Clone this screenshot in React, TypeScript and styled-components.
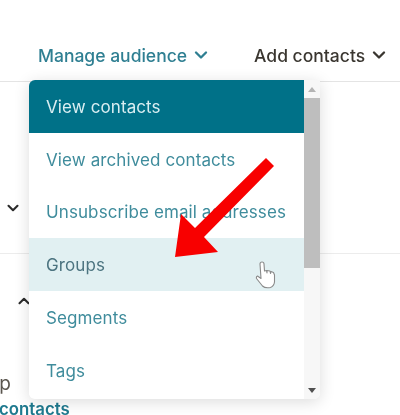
import React from 'react';
import styled, { createGlobalStyle } from 'styled-components';
import { ChevronDown, ChevronUp } from 'lucide-react';

const GlobalStyle = createGlobalStyle`
  html, body {
    margin: 0;
    padding: 0;
    background: #fff;
    overflow: hidden;
  }
`;

const Page = styled.div`
  position: relative;
  width: 400px;
  height: 415px;
  overflow: hidden;
  background: #fff;
  font-family: Inter, "Liberation Sans", sans-serif;
  filter: blur(0.45px);
`;

const NavBar = styled.nav`
  height: 82px;
  box-sizing: border-box;
  border-bottom: 1px solid #e4e4e4;
  padding: 43px 0 0 38px;
  display: flex;
  gap: 43px;
`;

const NavItem = styled.div<{ $active?: boolean }>`
  display: flex;
  align-items: center;
  gap: 4px;
  height: 24px;
  font-size: 17.5px;
  font-weight: 500;
  color: ${(p) => (p.$active ? '#2f7f92' : '#3a3630')};
`;

const Body = styled.div`
  position: relative;
  height: 333px;
`;

const Divider = styled.div`
  height: 171px;
  border-bottom: 1px solid #ececec;
`;

const Toggle = styled.span<{ $left: number; $top: number }>`
  position: absolute;
  left: ${(p) => p.$left}px;
  top: ${(p) => p.$top}px;
  display: flex;
  color: #2b2b2b;
`;

const PartialText = styled.div<{ $teal?: boolean; $top: number; $left: number }>`
  position: absolute;
  left: ${(p) => p.$left}px;
  top: ${(p) => p.$top}px;
  font-size: ${(p) => (p.$teal ? 16.8 : 19)}px;
  font-weight: ${(p) => (p.$teal ? 600 : 400)};
  color: ${(p) => (p.$teal ? '#1f7a8f' : '#5a554e')};
`;

const Menu = styled.div`
  position: absolute;
  left: 29px;
  top: 80px;
  width: 291px;
  height: 319px;
  display: flex;
  border-radius: 6px 0 6px 6px;
  background: #fff;
  box-shadow: 0 3px 16px rgba(0, 0, 0, 0.14);
  overflow: hidden;
`;

const MenuList = styled.ul`
  flex: 1;
  margin: 0;
  padding: 0;
  list-style: none;
`;

const MenuItem = styled.li<{ $state?: 'selected' | 'hover' }>`
  height: 52.8px;
  box-sizing: border-box;
  padding: 1px 0 0 17px;
  display: flex;
  align-items: center;
  font-size: 17px;
  letter-spacing: 0.1px;
  background: ${(p) =>
    p.$state === 'selected' ? '#007188' : p.$state === 'hover' ? '#e1f0f2' : '#fff'};
  color: ${(p) =>
    p.$state === 'selected' ? '#d9eef2' : p.$state === 'hover' ? '#4c7480' : '#3f8c9c'};
`;

const ScrollTrack = styled.div`
  width: 16px;
  display: flex;
  flex-direction: column;
  align-items: center;
  background: #f7f7f7;
`;

const ScrollButton = styled.div<{ $down?: boolean }>`
  height: 18px;
  display: flex;
  align-items: center;
  justify-content: center;
  flex: none;

  &::before {
    content: '';
    border-left: 4px solid transparent;
    border-right: 4px solid transparent;
    ${(p) => (p.$down ? 'border-top: 5px solid #505050;' : 'border-bottom: 5px solid #b4b4b4;')}
  }
`;

const ScrollThumb = styled.div`
  width: 100%;
  height: 170px;
  flex: none;
  background: #bebebe;
`;

const ScrollSpacer = styled.div`
  flex: 1;
`;

const Overlay = styled.svg<{ $left: number; $top: number }>`
  position: absolute;
  left: ${(p) => p.$left}px;
  top: ${(p) => p.$top}px;
`;

const App: React.FC = () => {
  return (
    <Page>
      <GlobalStyle />
      <NavBar>
        <NavItem $active>
          Manage audience <ChevronDown size={20} strokeWidth={2.8} />
        </NavItem>
        <NavItem>
          Add contacts <ChevronDown size={20} strokeWidth={2.8} />
        </NavItem>
      </NavBar>
      <Body>
        <Divider />
        <Toggle $left={4} $top={117}>
          <ChevronDown size={18} strokeWidth={2.8} />
        </Toggle>
        <Toggle $left={15} $top={210}>
          <ChevronUp size={18} strokeWidth={2.8} />
        </Toggle>
        <PartialText $left={-15} $top={290}>
          Up
        </PartialText>
        <PartialText $teal $left={-1} $top={317}>
          contacts
        </PartialText>
      </Body>
      <Menu>
        <MenuList>
          <MenuItem $state="selected">View contacts</MenuItem>
          <MenuItem>View archived contacts</MenuItem>
          <MenuItem>Unsubscribe email addresses</MenuItem>
          <MenuItem $state="hover">Groups</MenuItem>
          <MenuItem>Segments</MenuItem>
          <MenuItem>Tags</MenuItem>
        </MenuList>
        <ScrollTrack>
          <ScrollButton />
          <ScrollThumb />
          <ScrollSpacer />
          <ScrollButton $down />
        </ScrollTrack>
      </Menu>
      <Overlay $left={170} $top={155} width={110} height={110} viewBox="0 0 110 110">
        <path d="M96 3 L104 11 L34 82 L48 97 L5 102 L11 59 L25 73 Z" fill="#f80000" />
      </Overlay>
      <Overlay $left={254} $top={261} width={24} height={28} viewBox="0 0 24 28">
        <path
          d="M6 3 Q6 1 8 1 Q10 1 10 3 L10.5 10 L12.5 9.5 L13 12 L13 9.5 L16 10 L16.5 12.5 L17 10.5 L19.5 11.5 L20.5 14 L20.5 21 Q20 25 16.5 26.5 Q11 27.5 8.5 25 L2.5 17.5 Q2 15.5 3.5 15 L7 17.5 Z"
          fill="#fff"
          stroke="#8a8a8a"
          strokeWidth="1.1"
          strokeLinejoin="round"
        />
      </Overlay>
    </Page>
  );
};

export default App;
